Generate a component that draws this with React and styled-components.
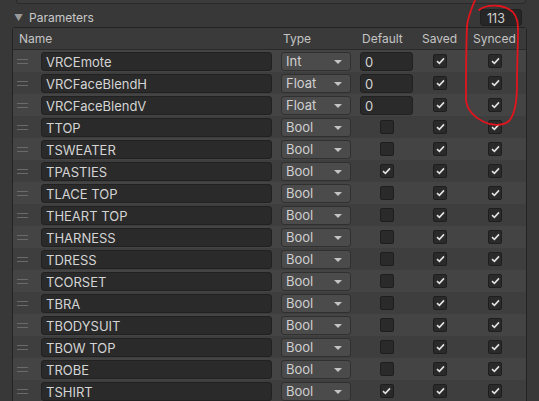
import styled, { createGlobalStyle } from "styled-components";

const params = [
  { name: "VRCEmote", type: "Int", def: "0", saved: true, synced: true },
  { name: "VRCFaceBlendH", type: "Float", def: "0", saved: true, synced: true },
  { name: "VRCFaceBlendV", type: "Float", def: "0", saved: true, synced: true },
  { name: "TTOP", type: "Bool", def: false, saved: true, synced: true },
  { name: "TSWEATER", type: "Bool", def: false, saved: true, synced: true },
  { name: "TPASTIES", type: "Bool", def: true, saved: true, synced: true },
  { name: "TLACE TOP", type: "Bool", def: false, saved: true, synced: true },
  { name: "THEART TOP", type: "Bool", def: false, saved: true, synced: true },
  { name: "THARNESS", type: "Bool", def: false, saved: true, synced: true },
  { name: "TDRESS", type: "Bool", def: false, saved: true, synced: true },
  { name: "TCORSET", type: "Bool", def: false, saved: true, synced: true },
  { name: "TBRA", type: "Bool", def: false, saved: true, synced: true },
  { name: "TBODYSUIT", type: "Bool", def: false, saved: true, synced: true },
  { name: "TBOW TOP", type: "Bool", def: false, saved: true, synced: true },
  { name: "TROBE", type: "Bool", def: false, saved: true, synced: true },
  { name: "TSHIRT", type: "Bool", def: true, saved: true, synced: true },
];

function Check({ on }) {
  return (
    <Box>
      {on && (
        <svg width="9" height="8" viewBox="0 0 9 8">
          <path d="M1 4.2 L3.4 6.4 L8 1.4" fill="none" stroke="#e2e2e2" strokeWidth="1.6" />
        </svg>
      )}
    </Box>
  );
}

function App() {
  return (
    <Page>
      <GlobalStyle />
      <TopBox />
      <Foldout>
        <Label>
          <Arrow>▼</Arrow>Parameters
        </Label>
        <SizeField>113</SizeField>
      </Foldout>
      <Table>
        <HeaderRow>
          <HeadCell w="268px" pad="6px">Name</HeadCell>
          <HeadCell w="79px" pad="2px">Type</HeadCell>
          <HeadCell w="60px" pad="2px">Default</HeadCell>
          <HeadCell w="51px" pad="2px">Saved</HeadCell>
          <HeadCell pad="2px">Synced</HeadCell>
        </HeaderRow>
        {params.map((p, i) => (
          <Row key={p.name} odd={i % 2 === 0}>
            <Handle>
              <svg width="11" height="5" viewBox="0 0 11 5">
                <path d="M0 0.5 H11 M0 4.5 H11" stroke="#6a6a6a" strokeWidth="1" />
              </svg>
            </Handle>
            <NameField>{p.name}</NameField>
            <Dropdown>
              {p.type}
              <Caret />
            </Dropdown>
            <DefaultCell>
              {typeof p.def === "string" ? <NumField>{p.def}</NumField> : <Check on={p.def} />}
            </DefaultCell>
            <FlagCell w="54px">
              <Check on={p.saved} />
            </FlagCell>
            <FlagCell w="56px">
              <Check on={p.synced} />
            </FlagCell>
          </Row>
        ))}
      </Table>
      <Scribble width="539" height="401" viewBox="0 0 539 401">
        <path
          d="M475 0 C472 8 468 16 467 26 C466 50 466 80 466 100 C467 110 474 117 484 122 C492 126 503 126 509 121 C516 113 517 98 517 85 C517 65 518 45 518 28 C518 16 512 8 500 6 C492 5 484 6 479 10"
          fill="none"
          stroke="#e3141c"
          strokeWidth="1.8"
          strokeLinecap="round"
        />
      </Scribble>
    </Page>
  );
}

export default App;

const GlobalStyle = createGlobalStyle`
  body {
    margin: 0;
    background: #383838;
    font-family: Inter, "Noto Sans", sans-serif;
  }
`;

const Page = styled.div`
  position: relative;
  width: 539px;
  height: 401px;
  overflow: hidden;
  background: #383838;
  color: #d2d2d2;
  font-size: 13px;
`;

const TopBox = styled.div`
  margin: -4px 0 0 16px;
  width: 508px;
  height: 6px;
  border: 1px solid #2a2a2a;
  border-radius: 0 0 3px 3px;
  background: #3c3c3c;
`;

const Foldout = styled.div`
  display: flex;
  align-items: center;
  justify-content: space-between;
  height: 20px;
  padding: 2px 17px 0 14px;
  margin-top: 1px;
`;

const Label = styled.div`
  display: flex;
  align-items: center;
  font-size: 12px;
  color: #c8c8c8;
`;

const Arrow = styled.span`
  font-size: 9px;
  color: #9a9a9a;
  margin-right: 6px;
`;

const SizeField = styled.div`
  width: 42px;
  height: 17px;
  line-height: 17px;
  box-sizing: border-box;
  padding-left: 6px;
  background: #262626;
  border: 1px solid #202020;
  border-radius: 3px;
  color: #d2d2d2;
  font-size: 12.5px;
`;

const Table = styled.div`
  margin-left: 12px;
  width: 513px;
  border: 1px solid #232323;
  border-radius: 3px 3px 0 0;
`;

const HeaderRow = styled.div`
  display: flex;
  align-items: center;
  height: 21px;
  background: #3a3a3a;
  border-bottom: 1px solid #2a2a2a;
`;

const HeadCell = styled.div`
  box-sizing: border-box;
  width: ${(p) => p.w || "auto"};
  padding-left: ${(p) => p.pad};
  color: #c4c4c4;
  font-size: 12px;
  flex-shrink: 0;
`;

const Row = styled.div`
  display: flex;
  align-items: center;
  height: 22px;
  background: ${(p) => (p.odd ? "#444444" : "#3e3e3e")};
`;

const Handle = styled.div`
  width: 28px;
  display: flex;
  padding-left: 4px;
  box-sizing: border-box;
  align-items: center;
`;

const NameField = styled.div`
  width: 231px;
  height: 19px;
  line-height: 18px;
  box-sizing: border-box;
  padding-left: 4px;
  margin-right: 9px;
  background: #2a2a2a;
  border: 1px solid #212121;
  border-radius: 3px;
  color: #d4d4d4;
`;

const Dropdown = styled.div`
  position: relative;
  width: 70px;
  height: 19px;
  line-height: 17px;
  box-sizing: border-box;
  padding-left: 4px;
  margin-right: 9px;
  background: #4b4b4b;
  border: 1px solid #303030;
  border-radius: 3px;
  color: #d0d0d0;
`;

const Caret = styled.span`
  position: absolute;
  right: 8px;
  top: 7px;
  border-left: 4px solid transparent;
  border-right: 4px solid transparent;
  border-top: 4px solid #c4c4c4;
`;

const DefaultCell = styled.div`
  width: 53px;
  display: flex;
  justify-content: center;
`;

const NumField = styled.div`
  width: 53px;
  height: 19px;
  line-height: 18px;
  box-sizing: border-box;
  padding-left: 4px;
  background: #2a2a2a;
  border: 1px solid #212121;
  border-radius: 3px;
  color: #d4d4d4;
`;

const FlagCell = styled.div`
  width: ${(p) => p.w};
  display: flex;
  justify-content: center;
`;

const Box = styled.div`
  width: 14px;
  height: 14px;
  box-sizing: border-box;
  display: flex;
  align-items: center;
  justify-content: center;
  background: #2a2a2a;
  border: 1px solid #1e1e1e;
  border-radius: 2px;
`;

const Scribble = styled.svg`
  position: absolute;
  left: 0;
  top: 0;
  pointer-events: none;
`;
